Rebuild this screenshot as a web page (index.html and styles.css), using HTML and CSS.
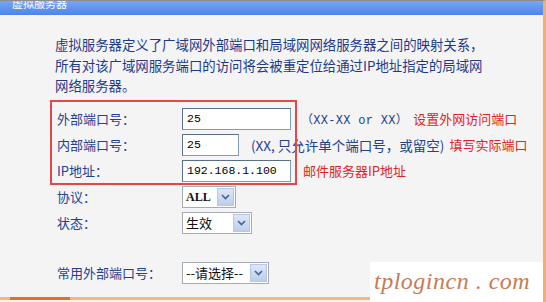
FILE: index.html
```html
<!DOCTYPE html>
<html lang="zh-CN">
<head>
    <meta charset="UTF-8">
    <title>虚拟服务器</title>
    <link rel="stylesheet" href="styles.css">
</head>
<body>
    <div class="frame">
        <div class="titlebar"><span>虚拟服务器</span></div>
        <p class="intro">虚拟服务器定义了广域网外部端口和局域网网络服务器之间的映射关系，<br>所有对该广域网服务端口的访问将会被重定位给通过IP地址指定的局域网<br>网络服务器。</p>
        <div class="form">
            <div class="mark"></div>
            <div class="row">
                <label>外部端口号：</label>
                <div class="field">
                    <span class="input wide">25</span>
                    <span class="hint mono">（XX-XX or XX）</span>
                    <span class="note">设置外网访问端口</span>
                </div>
            </div>
            <div class="row">
                <label>内部端口号：</label>
                <div class="field">
                    <span class="input short">25</span>
                    <span class="hint">(XX, 只允许单个端口号，或留空)</span>
                    <span class="note">填写实际端口</span>
                </div>
            </div>
            <div class="row">
                <label>IP地址：</label>
                <div class="field">
                    <span class="input wide">192.168.1.100</span>
                    <span class="note">邮件服务器IP地址</span>
                </div>
            </div>
            <div class="row">
                <label>协议：</label>
                <div class="field">
                    <span class="select"><span class="value mono">ALL</span><span class="arrow"><svg width="9" height="6" viewBox="0 0 9 6"><path d="M1 1l3.5 3.5L8 1" fill="none" stroke="#4d6185" stroke-width="1.6"/></svg></span></span>
                </div>
            </div>
            <div class="row">
                <label>状态：</label>
                <div class="field">
                    <span class="select"><span class="value status">生效</span><span class="arrow"><svg width="9" height="6" viewBox="0 0 9 6"><path d="M1 1l3.5 3.5L8 1" fill="none" stroke="#4d6185" stroke-width="1.6"/></svg></span></span>
                </div>
            </div>
            <div class="row common">
                <label>常用外部端口号：</label>
                <div class="field">
                    <span class="select"><span class="value">--请选择--</span><span class="arrow"><svg width="9" height="6" viewBox="0 0 9 6"><path d="M1 1l3.5 3.5L8 1" fill="none" stroke="#4d6185" stroke-width="1.6"/></svg></span></span>
                </div>
            </div>
        </div>
        <div class="footer"><span class="tab"></span></div>
        <div class="watermark">tplogincn . com</div>
    </div>
</body>
</html>
```

FILE: styles.css
```css
body {
    margin: 0;
    background: #f4f4f4;
    font-family: "Noto Sans CJK SC", "DejaVu Sans", sans-serif;
}
.frame {
    position: relative;
    width: 546px;
    height: 302px;
    overflow: hidden;
    box-sizing: border-box;
    border-top: 1px solid #8c8c8c;
    border-right: 3px solid #f2b06a;
    background: #f4f4f4;
}
.titlebar {
    height: 14px;
    background: linear-gradient(#77a6f6, #4d84ec);
    overflow: hidden;
    padding-left: 12px;
}
.titlebar span {
    display: block;
    margin-top: -5px;
    color: #fff;
    font-size: 11px;
    line-height: 14px;
}
.intro {
    margin: 0;
    padding: 19px 0 0 55px;
    font-size: 13.4px;
    line-height: 20.5px;
    color: #1d3a8a;
}
.form {
    position: relative;
    margin-top: 10px;
}
.mark {
    position: absolute;
    left: 50px;
    top: -6px;
    width: 247px;
    height: 85px;
    box-sizing: border-box;
    border: 2px solid #e34848;
}
.row {
    display: grid;
    grid-template-columns: 125px 1fr;
    align-items: center;
    height: 26px;
    padding-left: 57px;
}
.row.common {
    margin-top: 24px;
}
label {
    font-size: 13px;
    color: #23418f;
}
.field {
    display: flex;
    align-items: center;
}
.input {
    box-sizing: border-box;
    height: 22px;
    padding: 0 4px;
    border: 1px solid #7f9db9;
    border-top-color: #5a6e8c;
    border-left-color: #5a6e8c;
    background: #fff;
    font-family: "Liberation Mono", monospace;
    font-size: 11.5px;
    line-height: 20px;
    color: #000;
}
.input.wide {
    width: 109px;
}
.input.short {
    width: 57px;
}
.hint {
    margin-left: 12px;
    font-size: 13.5px;
    color: #23418f;
}
.hint.mono {
    font-family: "Liberation Mono", "Noto Sans CJK SC", monospace;
    font-size: 12px;
    margin-left: 10px;
    letter-spacing: 0.3px;
}
.note {
    margin-left: 5px;
    font-size: 13px;
    color: #e02424;
}
.input.wide + .note {
    margin-left: 12px;
}
.select {
    display: flex;
    align-items: stretch;
    height: 20px;
    border: 1px solid #a5acb5;
    background: #fff;
}
.value {
    padding: 0 6px 0 3px;
    font-size: 13px;
    line-height: 20px;
    color: #111;
}
.value.mono {
    font-family: "Liberation Serif", serif;
    font-weight: bold;
    font-size: 12px;
    padding-right: 5px;
}
.value.status {
    padding-right: 20px;
}
.arrow {
    display: flex;
    align-items: center;
    justify-content: center;
    width: 15px;
    margin: 1px;
    border: 1px solid #b7c6e2;
    background: linear-gradient(#dde7f8, #bccdee);
}
.footer {
    position: absolute;
    left: 0;
    right: 0;
    bottom: 2px;
    height: 3px;
    background: #f5b877;
}
.tab {
    display: block;
    margin-left: 10px;
    width: 60px;
    height: 3px;
    background: #e2701f;
}
.watermark {
    position: absolute;
    right: -3px;
    bottom: 0;
    width: 176px;
    height: 40px;
    background: #fff;
    padding-left: 4px;
    box-sizing: border-box;
    font-family: "Liberation Serif", serif;
    font-style: italic;
    font-size: 24px;
    line-height: 38px;
    color: #c77a55;
    letter-spacing: 0.5px;
}
```
